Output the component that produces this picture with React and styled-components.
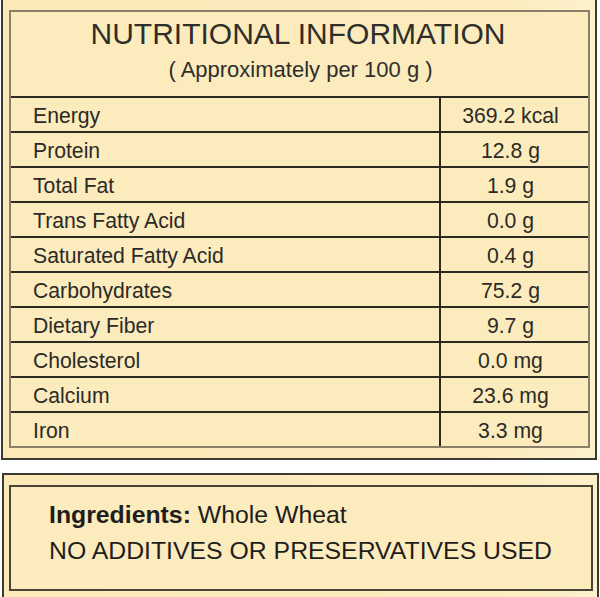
import React from "react";
import styled, { createGlobalStyle } from "styled-components";

const Global = createGlobalStyle`
  html, body { margin: 0; padding: 0; background: #ffffff; }
  body { font-family: "Liberation Sans", Arial, sans-serif; color: #2f2e2a; }
  * { box-sizing: border-box; }
`;

const Page = styled.div`
  width: 600px;
  height: 597px;
  overflow: hidden;
  background: #ffffff;
`;

const Card = styled.section`
  margin: ${(p) => p.$margin};
  border: 2px solid #3c3a33;
  border-top-width: ${(p) => (p.$noTop ? "0" : "2px")};
  padding: ${(p) => p.$pad};
  background: linear-gradient(90deg, #fbe9b8 0%, #fcecbf 85%, #fdf1cc 100%);
`;

const Frame = styled.div`
  border: 2px solid ${(p) => p.$line};
  background: #fcebbd;
`;

const Header = styled.header`
  height: 84px;
  padding-top: 2px;
  text-align: center;
`;

const Title = styled.h1`
  margin: 0;
  font-weight: 400;
  font-size: 30px;
  line-height: 39px;
  color: #2f2e2a;
  padding-right: 3px;
`;

const Subtitle = styled.p`
  margin: 0;
  font-size: 22px;
  line-height: 33px;
  color: #2f2e2a;
  padding-left: 2px;
`;

const Row = styled.div`
  display: grid;
  grid-template-columns: 1fr 149px;
  height: 35px;
  border-top: 2px solid #2c2a22;
`;

const Label = styled.div`
  padding: 2px 0 0 22px;
  font-size: 21.2px;
  line-height: 31px;
  color: #2b2a26;
`;

const Value = styled.div`
  border-left: 2px solid #2c2a22;
  padding: 2px 8px 0 0;
  text-align: center;
  font-size: 21.2px;
  line-height: 31px;
  color: #2b2a26;
`;

const Ingredients = styled.div`
  height: 102px;
  padding: 10px 0 0 38px;
  font-size: 24.8px;
  line-height: 36px;
  color: #1f1e1c;
`;

const Strong = styled.strong`
  font-weight: 700;
`;

const rows = [
  ["Energy", "369.2 kcal"],
  ["Protein", "12.8 g"],
  ["Total Fat", "1.9 g"],
  ["Trans Fatty Acid", "0.0 g"],
  ["Saturated Fatty Acid", "0.4 g"],
  ["Carbohydrates", "75.2 g"],
  ["Dietary Fiber", "9.7 g"],
  ["Cholesterol", "0.0 mg"],
  ["Calcium", "23.6 mg"],
  ["Iron", "3.3 mg"],
];

export default function App() {
  return (
    <Page>
      <Global />
      <Card $noTop $margin="0 3px 0 1px" $pad="10px 5px 10px 6px">
        <Frame $line="#8a806a">
          <Header>
            <Title>NUTRITIONAL INFORMATION</Title>
            <Subtitle>( Approximately per 100 g )</Subtitle>
          </Header>
          {rows.map(([k, v]) => (
            <Row key={k}>
              <Label>{k}</Label>
              <Value>{v}</Value>
            </Row>
          ))}
        </Frame>
      </Card>
      <Card $margin="13px 1px 0 2px" $pad="10px 4px 10px 5px">
        <Frame $line="#48443a">
          <Ingredients>
            <div>
              <Strong>Ingredients:</Strong> Whole Wheat
            </div>
            <div>NO ADDITIVES OR PRESERVATIVES USED</div>
          </Ingredients>
        </Frame>
      </Card>
    </Page>
  );
}
